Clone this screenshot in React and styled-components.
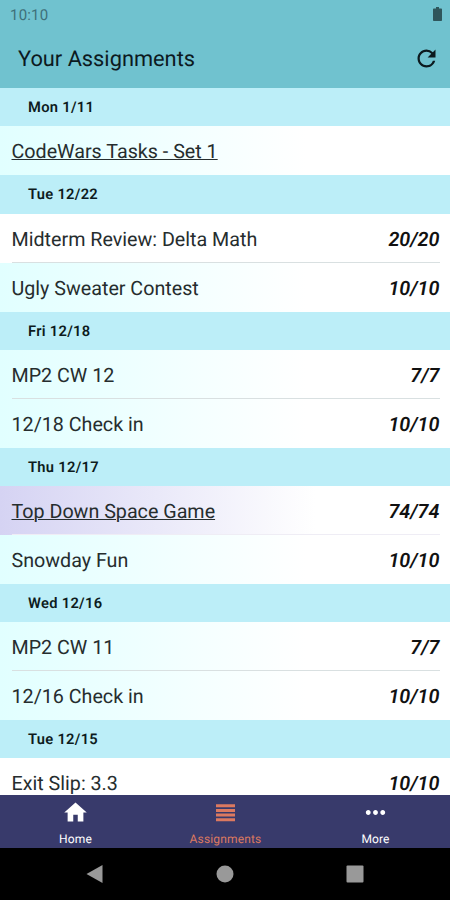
import React from "react";
import styled, { createGlobalStyle } from "styled-components";
import { MdHome, MdMoreHoriz, MdRefresh } from "react-icons/md";

const GlobalStyle = createGlobalStyle`
    * {
        box-sizing: border-box;
    }

    body {
        margin: 0;
        font-family: Roboto, "Liberation Sans", sans-serif;
        text-rendering: geometricPrecision;
    }
`;

const Screen = styled.div`
    display: flex;
    flex-direction: column;
    width: 450px;
    height: 900px;
    overflow: hidden;
    background: #fff;
`;

const Top = styled.header`
    flex: none;
    height: 88.4px;
    background: #70c2cf;
`;

const StatusBar = styled.div`
    display: flex;
    align-items: center;
    justify-content: space-between;
    height: 29px;
    padding: 0 8px 0 10px;
    color: #3e7079;
    font-size: 15px;
    letter-spacing: 0.2px;
`;

const Battery = styled.svg`
    display: block;
    width: 9px;
    height: 14px;
    margin-top: -2px;
    fill: #2f565c;
`;

const TitleBar = styled.div`
    display: flex;
    align-items: center;
    justify-content: space-between;
    height: 59px;
    padding: 0 10px 0 18px;
    color: #0c1a1f;
`;

const Title = styled.h1`
    margin: 2px 0 0;
    font-size: 21.8px;
    font-weight: 400;
`;

const List = styled.main`
    flex: 1;
    min-height: 0;
    overflow: hidden;
`;

const DateHeader = styled.h2`
    height: 38.1px;
    margin: 0;
    padding-left: 28px;
    background: #bceef8;
    color: #0d1b20;
    font-size: 14.7px;
    font-weight: 600;
    line-height: 39px;
    letter-spacing: 0.3px;
`;

const rowColors = {
    plain: "#fff",
    mint: "linear-gradient(90deg, #e1ffff 0%, #fff 68%)",
    violet: "linear-gradient(90deg, #d5d3f3 0%, #fff 70%)",
};

const Row = styled.div`
    height: 49px;
    padding: 0 10.5px 0 11.5px;
    background: ${({ $color }) => rowColors[$color]};
`;

const RowContent = styled.div`
    display: flex;
    align-items: center;
    justify-content: space-between;
    height: 49px;
    padding-top: 3px;
    border-bottom: 1px solid ${({ $line }) => $line || "transparent"};
`;

const Name = styled.span`
    color: #262d2e;
    font-size: 19.7px;
    text-decoration: ${({ $link }) => ($link ? "underline" : "none")};
    text-decoration-thickness: 1px;
    text-underline-offset: 1px;
`;

const Score = styled.span`
    color: #111;
    font-size: 19.8px;
    font-style: italic;
    font-weight: 600;
`;

const Tabs = styled.nav`
    display: grid;
    flex: none;
    grid-template-columns: repeat(3, 1fr);
    height: 53px;
    background: #383a6b;
`;

const Tab = styled.div`
    display: flex;
    flex-direction: column;
    align-items: center;
    padding: 4px 0 0 1px;
    color: ${({ $active }) => ($active ? "#dc7960" : "#fff")};
    font-size: 12px;
    line-height: 14px;
    letter-spacing: 0.15px;
`;

const TabIcon = styled.div`
    display: flex;
    align-items: center;
    justify-content: center;
    height: 27px;
    margin-bottom: 6px;
`;

const SystemBar = styled.footer`
    display: flex;
    flex: none;
    align-items: center;
    justify-content: space-around;
    height: 52px;
    padding: 0 30px;
    background: #000;
`;

const SystemIcon = styled.svg`
    display: block;
    width: 18px;
    height: 18px;
    fill: #999;
`;

const days = [
    { date: "Mon 1/11", items: [{ name: "CodeWars Tasks - Set 1", link: true, color: "mint" }] },
    {
        date: "Tue 12/22",
        items: [
            { name: "Midterm Review: Delta Math", score: "20/20", color: "plain" },
            { name: "Ugly Sweater Contest", score: "10/10", color: "mint" },
        ],
    },
    {
        date: "Fri 12/18",
        items: [
            { name: "MP2 CW 12", score: "7/7", color: "mint" },
            { name: "12/18 Check in", score: "10/10", color: "mint" },
        ],
    },
    {
        date: "Thu 12/17",
        items: [
            { name: "Top Down Space Game", score: "74/74", link: true, color: "violet", line: "#efedf5" },
            { name: "Snowday Fun", score: "10/10", color: "mint" },
        ],
    },
    {
        date: "Wed 12/16",
        items: [
            { name: "MP2 CW 11", score: "7/7", color: "mint" },
            { name: "12/16 Check in", score: "10/10", color: "mint" },
        ],
    },
    { date: "Tue 12/15", items: [{ name: "Exit Slip: 3.3", score: "10/10", color: "plain" }] },
];

const ListIcon = () => (
    <svg width="19" height="18" viewBox="0 0 19 18" fill="currentColor">
        <path d="M0 .3h19v3H0zM0 5h19v3H0zM0 9.600h19v3H0zM0 14.200h19v3H0z" />
    </svg>
);

const Day = ({ day }) => (
    <section>
        <DateHeader>{day.date}</DateHeader>
        {day.items.map((item, i) => (
            <Row key={item.name} $color={item.color}>
                <RowContent $line={i < day.items.length - 1 && (item.line || "#d9e0e1")}>
                    <Name $link={item.link}>{item.name}</Name>
                    {item.score && <Score>{item.score}</Score>}
                </RowContent>
            </Row>
        ))}
    </section>
);

const App = () => {
    return (
        <Screen>
            <GlobalStyle />
            <Top>
                <StatusBar>
                    <span>10:10</span>
                    <Battery viewBox="0 0 9 14">
                        <path d="M3 0h3v1.5h2.2a.8.8 0 0 1 .8.8v10.9a.8.8 0 0 1-.8.8H.8a.8.8 0 0 1-.8-.8V2.300a.8.8 0 0 1 .8-.8H3z" />
                    </Battery>
                </StatusBar>
                <TitleBar>
                    <Title>Your Assignments</Title>
                    <MdRefresh size={27} />
                </TitleBar>
            </Top>
            <List>
                {days.map((day) => (
                    <Day key={day.date} day={day} />
                ))}
            </List>
            <Tabs>
                <Tab>
                    <TabIcon><MdHome size={27} /></TabIcon>
                    Home
                </Tab>
                <Tab $active>
                    <TabIcon><ListIcon /></TabIcon>
                    Assignments
                </Tab>
                <Tab>
                    <TabIcon><MdMoreHoriz size={29} /></TabIcon>
                    More
                </Tab>
            </Tabs>
            <SystemBar>
                <SystemIcon viewBox="0 0 18 18"><path d="M16.500 0v18L.5 9z" /></SystemIcon>
                <SystemIcon viewBox="0 0 18 18"><circle cx="9" cy="9" r="8.500" /></SystemIcon>
                <SystemIcon viewBox="0 0 18 18"><rect x="0.500" y="0.500" width="17" height="17" rx="1" /></SystemIcon>
            </SystemBar>
        </Screen>
    );
};

export default App;
